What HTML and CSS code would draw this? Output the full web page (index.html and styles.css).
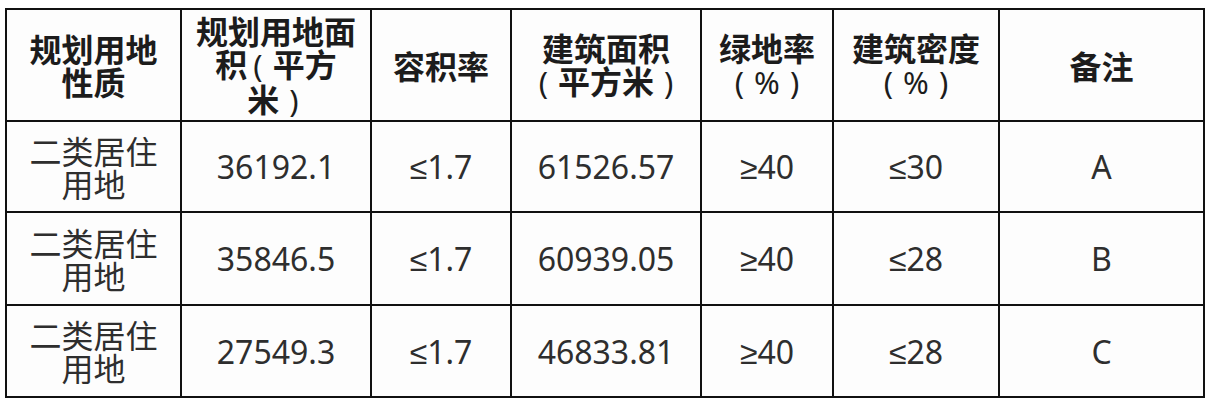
FILE: index.html
```html
<!DOCTYPE html>
<html lang="zh-CN">
<head>
<meta charset="utf-8">
<link rel="stylesheet" href="styles.css">
</head>
<body>
<table class="grid">
  <colgroup>
    <col class="c1"><col class="c2"><col class="c3"><col class="c4"><col class="c5"><col class="c6"><col class="c7">
  </colgroup>
  <thead>
    <tr class="head">
      <th>规划用地<br>性质</th>
      <th>规划用地面<br>积<span class="pl">(</span>平方<br>米<span class="pr">)</span></th>
      <th>容积率</th>
      <th>建筑面积<br><span class="pl">(</span>平方米<span class="pr">)</span></th>
      <th>绿地率<br><span class="pl">(</span><span class="pct">%</span><span class="pr">)</span></th>
      <th>建筑密度<br><span class="pl">(</span><span class="pct">%</span><span class="pr">)</span></th>
      <th>备注</th>
    </tr>
  </thead>
  <tbody>
    <tr class="r1">
      <td class="cjk">二类居住<br>用地</td>
      <td>36192.1</td>
      <td>≤1.7</td>
      <td>61526.57</td>
      <td>≥40</td>
      <td>≤30</td>
      <td>A</td>
    </tr>
    <tr class="r2">
      <td class="cjk">二类居住<br>用地</td>
      <td>35846.5</td>
      <td>≤1.7</td>
      <td>60939.05</td>
      <td>≥40</td>
      <td>≤28</td>
      <td>B</td>
    </tr>
    <tr class="r3">
      <td class="cjk">二类居住<br>用地</td>
      <td>27549.3</td>
      <td>≤1.7</td>
      <td>46833.81</td>
      <td>≥40</td>
      <td>≤28</td>
      <td>C</td>
    </tr>
  </tbody>
</table>
</body>
</html>
```

FILE: styles.css
```css
html, body {
  margin: 0;
  padding: 0;
  background: #ffffff;
}
body {
  padding: 8px 0 0 5px;
  font-family: "Noto Sans", "Liberation Sans", "Noto Sans CJK SC", sans-serif;
}
.grid {
  border-collapse: collapse;
  table-layout: fixed;
  width: 1198px;
  background: #fdfdfd;
}
.c1 { width: 175px; }
.c2 { width: 190px; }
.c3 { width: 140px; }
.c4 { width: 190px; }
.c5 { width: 132px; }
.c6 { width: 166px; }
.c7 { width: 205px; }
.grid th, .grid td {
  border: 2px solid #111111;
  padding: 0;
  text-align: center;
  vertical-align: middle;
}
.grid th {
  font-family: "Noto Sans CJK SC", sans-serif;
  font-weight: 700;
  font-size: 32px;
  line-height: 33px;
  color: #1c1c1c;
}
.pl, .pr {
  font-family: "Noto Sans", sans-serif;
  font-weight: 400;
  font-size: 31px;
}
.pl { margin: 0 10px 0 6px; }
.pr { margin: 0 6px 0 10px; }
.pct {
  font-family: "Noto Sans", sans-serif;
  font-weight: 400;
  font-size: 31px;
}
.grid td {
  font-size: 32px;
  line-height: 33px;
  color: #2e2e2e;
  font-weight: 400;
}
.grid td.cjk {
  font-family: "Noto Sans CJK SC", sans-serif;
  font-size: 32px;
  line-height: 33px;
}
.head { height: 112px; }
.r1 { height: 91px; }
.r2 { height: 93px; }
.r3 { height: 92px; }
```
